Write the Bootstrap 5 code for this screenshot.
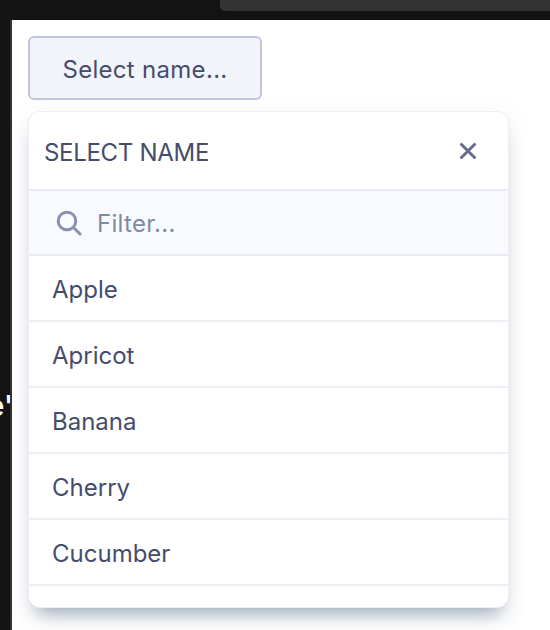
<!DOCTYPE html>
<html lang="en">
<head>
<meta charset="utf-8">
<title>Select menu</title>
<link href="https://cdn.jsdelivr.net/npm/bootstrap@5.3.0/dist/css/bootstrap.min.css" rel="stylesheet">
<style>
html, body { height: 100%; }
body { margin: 0; background: #fff; overflow: hidden; font-family: Inter, "Liberation Sans", sans-serif; color: #444d6e; }
.app-top { height: 20px; background: #131313; padding-left: 220px; }
.app-tab { height: 11px; background: #333; border-bottom-left-radius: 5px; }
.app-body { height: 610px; }
.app-rail { width: 12px; background: #131313; border-right: 2px solid #333; color: #fff; font-size: 28px; font-weight: 600; line-height: 1; overflow: hidden; white-space: nowrap; flex: none; padding-top: 372px; }
.rail-text { margin-right: -3px; }
.app-main { padding: 16px 0 0 16px; width: 496px; }
.select-btn { width: 234px; height: 64px; background: #f3f4f9; border: 2px solid #c2c6dd; border-radius: 6px; color: #444d6e; font-size: 24px; font-weight: 400; letter-spacing: .3px; padding: 3px 0 0; }
.select-btn:hover { background: #f3f4f9; border-color: #c2c6dd; color: #444d6e; }
.menu-panel { width: 481px; height: 497px; margin-top: 11px; border: 1px solid #eeeef3; border-radius: 12px; box-shadow: 0 14px 18px -8px rgba(90, 115, 135, .55), 0 4px 24px rgba(110, 115, 150, .09); overflow: hidden; }
.menu-head { height: 79px; padding: 0 16px; border-bottom: 2px solid #e9e9f4; }
.menu-title { font-size: 24px; font-weight: 400; letter-spacing: -.3px; margin: 5px 0 0 -1px; color: #444d6e; }
.menu-close { background: none; border: 0; padding: 0; line-height: 0; margin-right: 16px; }
.menu-filter { height: 65px; padding: 0 24px 0 27px; background: #f9faff; border-bottom: 2px solid #e9e9f4; gap: 15px; }
.menu-input { border: 0; background: transparent; padding: 2px 0 0; font-size: 24px; letter-spacing: .3px; color: #444d6e; outline: 0; width: 100%; }
.menu-input::placeholder { color: #7d8ba1; opacity: 1; }
.list-group-flush > .menu-item, .list-group-flush > .menu-item:last-child { height: 66px; padding: 4px 23px 0; border: 0; border-bottom: 2px solid #eeeef4; font-size: 24px; color: #444d6e; display: flex; align-items: center; border-radius: 0; }
</style>
</head>
<body>
<div class="app-top"><div class="app-tab"></div></div>
<div class="app-body d-flex">
  <div class="app-rail d-flex justify-content-end"><span class="rail-text">e'</span></div>
  <div class="app-main">
    <button type="button" class="btn select-btn">Select name...</button>
    <div class="menu-panel bg-white">
      <div class="menu-head d-flex align-items-center justify-content-between">
        <h2 class="menu-title">SELECT NAME</h2>
        <button type="button" class="menu-close" aria-label="Close">
          <svg width="16" height="16" viewBox="0 0 16 16" fill="none" stroke="#656c8c" stroke-width="3" stroke-linecap="round"><path d="M1.5 1.5 14.5 14.5M14.5 1.5 1.5 14.5"/></svg>
        </button>
      </div>
      <div class="menu-filter d-flex align-items-center">
        <svg class="flex-shrink-0" width="26" height="26" viewBox="0 0 26 26" fill="none" stroke="#8b90b0" stroke-width="3" stroke-linecap="round"><circle cx="11" cy="11" r="8.8"/><path d="M17.5 17.5 24 24"/></svg>
        <input class="menu-input" type="text" placeholder="Filter...">
      </div>
      <div class="list-group list-group-flush">
        <div class="list-group-item menu-item">Apple</div>
        <div class="list-group-item menu-item">Apricot</div>
        <div class="list-group-item menu-item">Banana</div>
        <div class="list-group-item menu-item">Cherry</div>
        <div class="list-group-item menu-item">Cucumber</div>
      </div>
    </div>
  </div>
</div>
<script src="https://cdn.jsdelivr.net/npm/bootstrap@5.3.0/dist/js/bootstrap.bundle.min.js"></script>
</body>
</html>
